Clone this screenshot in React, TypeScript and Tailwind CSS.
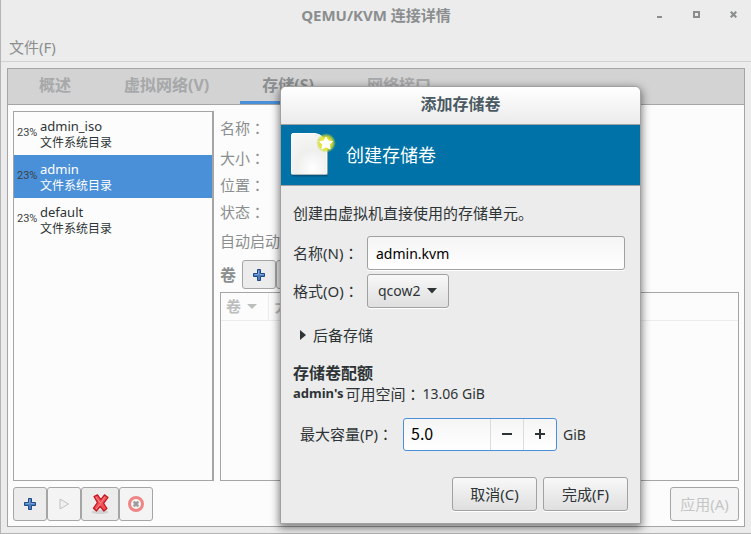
import type { ReactNode } from 'react';

const tabs = [
  { label: '概述', active: false },
  { label: '虚拟网络(V)', active: false },
  { label: '存储(S)', active: true },
  { label: '网络接口', active: false },
];

const pools = [
  { name: 'admin_iso', type: '文件系统目录', used: '23%', selected: false },
  { name: 'admin', type: '文件系统目录', used: '23%', selected: true },
  { name: 'default', type: '文件系统目录', used: '23%', selected: false },
];

function Colon() {
  return <span className="font-['Noto_Sans_CJK_TC',sans-serif]">：</span>;
}

function PlusIcon() {
  return (
    <svg width="14" height="14" viewBox="0 0 14 14">
      <path d="M5.500 1.500h3v4h4v3h-4v4h-3v-4h-4v-3h4z" fill="#4a7dbd" stroke="#1f4a87" strokeLinejoin="round" />
      <path d="M6.500 2.500v4h-4M11.500 6.500h-4" fill="none" stroke="#7aa4d6" />
    </svg>
  );
}

function PlayIcon() {
  return (
    <svg width="12" height="14" viewBox="0 0 12 14">
      <path d="M2 2l8.500 5-8.500 5z" fill="#f0f0ee" stroke="#c2c4c0" strokeLinejoin="round" />
    </svg>
  );
}

function DeleteIcon() {
  return (
    <svg width="20" height="22" viewBox="0 0 20 22">
      <ellipse cx="10" cy="19" rx="8.500" ry="2" fill="#d2d2d2" />
      <path
        d="M4 3.500L7.500 1.800l3.300 4.700L14.500 1.800l3.500 2.700-4.400 5.800 3.300 5.200-3 2.500-3.800-4.600-3.500 4.600-3.200-2.700 4-5.800z"
        fill="#ef4f55"
        stroke="#c3141d"
        strokeWidth="1.200"
        strokeLinejoin="round"
      />
      <path d="M6 4l4.800 6.500L6 16M15 4l-4 5.500" fill="none" stroke="#f98d90" />
    </svg>
  );
}

function StopIcon() {
  return (
    <svg width="18" height="18" viewBox="0 0 18 18">
      <circle cx="9" cy="9" r="6.500" fill="#f7f3f3" stroke="#ee8587" strokeWidth="3" />
      <path d="M6.700 6.700l4.600 4.600M11.300 6.700l-4.600 4.600" stroke="#9a9c9c" strokeWidth="2.400" />
    </svg>
  );
}

function DocumentIcon() {
  return (
    <svg width="46" height="46" viewBox="0 0 46 46" className="shrink-0">
      <defs>
        <radialGradient id="page" cx="0.6" cy="0.85" r="0.9">
          <stop offset="0" stopColor="#ffffff" />
          <stop offset="0.5" stopColor="#efefee" />
          <stop offset="1" stopColor="#f6f6f5" />
        </radialGradient>
        <radialGradient id="glow">
          <stop offset="0.4" stopColor="#f4ec2c" />
          <stop offset="0.7" stopColor="#d5dd25" stopOpacity="0.8" />
          <stop offset="1" stopColor="#b5d335" stopOpacity="0" />
        </radialGradient>
      </defs>
      <path d="M2.500 43.500h35" stroke="#0a4264" strokeWidth="2" opacity="0.6" />
      <path
        d="M3 1.500h22q8 1 12 10v29q0 2-2 2H3q-1.500 0-1.500-2V3q0-1.500 1.500-1.500z"
        fill="url(#page)"
        stroke="#ffffff"
      />
      <path d="M1.500 42.500h36v-30" fill="none" stroke="#8c9aa0" strokeWidth="1" opacity="0.7" />
      <path d="M24 2q5 2 5 9 5-1 8 3" fill="#dcdcda" />
      <circle cx="36" cy="11" r="10" fill="url(#glow)" />
      <path
        d="M36 5l2 4 4.500.5-3.200 3.100.9 4.400-4.200-2.200-4.100 2.200.9-4.400-3.300-3.100 4.500-.5z"
        fill="#fff"
        stroke="#fff"
        strokeLinejoin="round"
      />
    </svg>
  );
}

function ToolButton({ label, disabled, wide, children }: { label: string; disabled?: boolean; wide?: boolean; children: ReactNode }) {
  return (
    <button
      aria-label={label}
      disabled={disabled}
      className={`flex h-[34px] items-center justify-center rounded-[3px] border border-[#a5a5a5] ${
        wide ? 'w-[38px]' : 'w-[34px]'
      } ${disabled ? 'bg-[#f4f4f4]' : 'bg-[#ececec]'}`}
    >
      {children}
    </button>
  );
}

function TitleBar() {
  return (
    <header className="grid h-[29px] grid-cols-[1fr_auto_1fr] items-center">
      <h1 className="col-start-2 text-[15px] leading-5 font-bold text-[#8b8e8f]">QEMU/KVM 连接详情</h1>
      <div className="flex justify-end gap-[17px] pr-2 text-[#8b8e8f]">
        <button aria-label="最小化" className="flex size-5 items-center justify-center">
          <svg width="7" height="7" viewBox="0 0 7 7"><path d="M1 5h5v2H1z" fill="currentColor" /></svg>
        </button>
        <button aria-label="最大化" className="flex size-5 items-center justify-center">
          <svg width="7" height="7" viewBox="0 0 7 7"><path d="M1 1h5v5H1z" fill="none" stroke="currentColor" strokeWidth="2" /></svg>
        </button>
        <button aria-label="关闭" className="flex size-5 items-center justify-center">
          <svg width="7" height="7" viewBox="0 0 7 7"><path d="M.7.7l5.600 5.600M6.300.7L.7 6.300" stroke="currentColor" strokeWidth="2.200" /></svg>
        </button>
      </div>
    </header>
  );
}

function PoolList() {
  return (
    <ul className="flex-1 border border-r-2 border-[#a5a5a5]">
      {pools.map((pool) => (
        <li
          key={pool.name}
          className={`flex h-[43px] items-center gap-[3px] pl-[3px] ${pool.selected ? 'bg-[#4a90d9] text-white' : 'text-[#2e3436]'}`}
        >
          <span className="w-5 font-['Roboto',sans-serif] text-[11px] text-[#3c4143]">{pool.used}</span>
          <div className="pt-px">
            <p className="text-[13px] leading-[18px]">{pool.name}</p>
            <p className="text-xs leading-4">{pool.type}</p>
          </div>
        </li>
      ))}
    </ul>
  );
}

function PoolDetails() {
  return (
    <section className="flex min-w-0 flex-1 flex-col text-[15px] text-[#8b8e8f]">
      <dl>
        <dt className="flex h-[34px] items-center">名称<Colon /></dt>
        <dt className="flex h-[27px] items-center">大小<Colon /></dt>
        <dt className="flex h-[27px] items-center">位置<Colon /></dt>
        <dt className="flex h-[27px] items-center">状态<Colon /></dt>
        <dt className="flex h-[30px] items-center">自动启动<Colon /></dt>
      </dl>
      <div className="mt-1 mb-[3px] flex items-center">
        <h2 className="w-[22px] text-base leading-6 font-bold">卷</h2>
        <button aria-label="新建卷" className="flex h-[29px] w-[34px] items-center justify-center rounded-[3px] border border-[#a5a5a5] bg-[#ececec]">
          <PlusIcon />
        </button>
        <button aria-label="刷新卷列表" className="h-[29px] w-[34px] rounded-[3px] border border-[#a5a5a5] bg-[#ececec]" />
      </div>
      <div className="flex-1 border border-[#a5a5a5]">
        <table className="w-full table-fixed text-left font-bold text-[#bcbdbd]">
          <thead>
            <tr className="h-[27px] border-b border-[#ececec]">
              <th className="w-[47px] border-r border-[#ececec] pl-[5px]">
                <span className="flex items-center gap-1.5">
                  卷
                  <svg width="10" height="5" viewBox="0 0 10 5"><path d="M0 0h10L5 5z" fill="currentColor" /></svg>
                </span>
              </th>
              <th className="pl-1.5">大小</th>
            </tr>
          </thead>
        </table>
      </div>
    </section>
  );
}

function DialogButton({ children }: { children: ReactNode }) {
  return (
    <button className="h-[34px] w-[85px] rounded-[3px] border border-[#a1a1a1] bg-linear-to-b from-[#f8f8f8] to-[#dfdfdf] shadow-[0_1px_0_#fff]">
      {children}
    </button>
  );
}

function AddVolumeDialog() {
  return (
    <div
      role="dialog"
      aria-labelledby="dialog-title"
      className="absolute top-[86px] left-[279px] w-[361px] rounded-t-[6px] border border-[#a1a1a1] bg-[#ececec] text-[15px] text-[#2e3436] shadow-[0_3px_9px_1px_rgba(0,0,0,0.5)]"
    >
      <h2
        id="dialog-title"
        className="flex h-[38px] items-center justify-center rounded-t-[5px] border-b border-[#a1a1a1] bg-linear-to-b from-white to-[#ebebeb] pb-1 text-base leading-6 font-bold text-[#4a5a63]"
      >
        添加存储卷
      </h2>
      <div className="flex h-[61px] items-center gap-[10px] border-b border-[#a1a1a1] bg-[#0072a8] pl-[9px] text-lg text-white">
        <DocumentIcon />
        创建存储卷
      </div>

      <form className="px-3 pt-4 pb-3" onSubmit={(e) => e.preventDefault()}>
        <p className="h-[34px] leading-[22px]">创建由虚拟机直接使用的存储单元。</p>
        <div className="grid grid-cols-[74px_258px] items-center gap-y-1">
          <label htmlFor="name" className="whitespace-nowrap">名称(N)<Colon /></label>
          <input
            id="name"
            defaultValue="admin.kvm"
            className="h-[34px] rounded-[3px] border border-[#a1a1a1] bg-linear-to-b from-[#f5f5f5] to-white px-2 text-sm text-black shadow-[0_1px_0_#fff] outline-none"
          />
          <label htmlFor="format" className="whitespace-nowrap">格式(O)<Colon /></label>
          <div className="relative w-[82px]">
            <select
              id="format"
              defaultValue="qcow2"
              className="h-[34px] w-full appearance-none rounded-[3px] border border-[#a1a1a1] bg-linear-to-b from-[#f8f8f8] to-[#dfdfdf] pl-[10px] text-sm shadow-[0_1px_0_#fff] outline-none"
            >
              <option>qcow2</option>
              <option>raw</option>
            </select>
            <svg width="10" height="6" viewBox="0 0 10 6" className="pointer-events-none absolute top-[14px] right-3">
              <path d="M0 0h10L5 5.500z" fill="#2e3436" />
            </svg>
          </div>
        </div>

        <button type="button" className="mt-4 flex h-[22px] items-center gap-[7px] pl-[7px]">
          <svg width="6" height="10" viewBox="0 0 6 10"><path d="M0 0l6 5-6 5z" fill="#2e3436" /></svg>
          后备存储
        </button>

        <h3 className="mt-4 text-base leading-[22px] font-bold">存储卷配额</h3>
        <p className="flex h-5 items-center">
          <b className="mr-0.5 text-[13px]">admin's</b>
          可用空间<Colon />
          <span className="ml-0.5 text-sm">13.06 GiB</span>
        </p>

        <div className="mt-[14px] flex items-center">
          <label htmlFor="capacity" className="w-[110px] pl-[7px] whitespace-nowrap">最大容量(P)<Colon /></label>
          <div className="flex h-[33px] w-[154px] overflow-hidden rounded-[3px] border border-[#4a90d9] bg-linear-to-b from-[#f5f5f5] to-white">
            <input
              id="capacity"
              defaultValue="5.0"
              className="min-w-0 flex-1 px-[7px] pb-1 font-['Noto_Sans_CJK_SC',sans-serif] text-base text-black outline-none"
            />
            <button type="button" aria-label="减少" className="flex w-[33px] items-center justify-center border-l border-[#dcdcdc] pb-0.5">
              <svg width="10" height="10" viewBox="0 0 10 10"><path d="M0 4h10v2H0z" fill="#2e3436" /></svg>
            </button>
            <button type="button" aria-label="增加" className="flex w-[33px] items-center justify-center border-l border-[#dcdcdc] pb-0.5">
              <svg width="10" height="10" viewBox="0 0 10 10"><path d="M4 0h2v4h4v2H6v4H4V6H0V4h4z" fill="#2e3436" /></svg>
            </button>
          </div>
          <span className="ml-1.5 text-sm">GiB</span>
        </div>

        <div className="mt-[26px] flex justify-end gap-1.5">
          <DialogButton>取消(C)</DialogButton>
          <DialogButton>完成(F)</DialogButton>
        </div>
      </form>
    </div>
  );
}

export default function App() {
  return (
    <div className="relative flex h-screen flex-col border-b border-l border-[#b4b4b4] bg-[#ececec] font-['Noto_Sans','Noto_Sans_CJK_SC',sans-serif]">
      <TitleBar />
      <nav className="flex h-[33px] items-center border-b border-[#d2d2d2] pt-1 pl-2 text-[15px] text-[#8b8e8f]">
        <button>文件(F)</button>
      </nav>

      <main className="mx-1.5 mt-1.5 mb-1.5 flex min-h-0 flex-1 flex-col border border-[#a5a5a5] bg-[#fcfcfc]">
        <div role="tablist" className="flex h-9 shrink-0 gap-[9px] border-b border-[#a5a5a5] bg-[#d3d3d3] pl-[9px] text-base font-bold">
          {tabs.map((tab) => (
            <button
              key={tab.label}
              role="tab"
              aria-selected={tab.active}
              className={`border-b-3 px-[22px] ${tab.active ? 'border-[#4a90d9] text-[#8b8e8f]' : 'border-transparent text-[#a6a8a9]'}`}
            >
              {tab.label}
            </button>
          ))}
        </div>
        <div className="flex min-h-0 flex-1 gap-1.5 px-[5px] pt-1.5">
          <div className="flex w-[201px] flex-col">
            <PoolList />
          </div>
          <PoolDetails />
        </div>
        <div className="flex justify-between px-[5px] pt-1.5 pb-[5px]">
          <div className="flex">
            <ToolButton label="添加池"><PlusIcon /></ToolButton>
            <ToolButton label="启动池" disabled><PlayIcon /></ToolButton>
            <ToolButton label="删除池" wide><DeleteIcon /></ToolButton>
            <ToolButton label="停止池" disabled><StopIcon /></ToolButton>
          </div>
          <button disabled className="h-[34px] w-[69px] rounded-[3px] border border-[#a5a5a5] bg-[#f4f4f4] text-[15px] text-[#c4c6c6]">
            应用(A)
          </button>
        </div>
      </main>

      <AddVolumeDialog />
    </div>
  );
}
